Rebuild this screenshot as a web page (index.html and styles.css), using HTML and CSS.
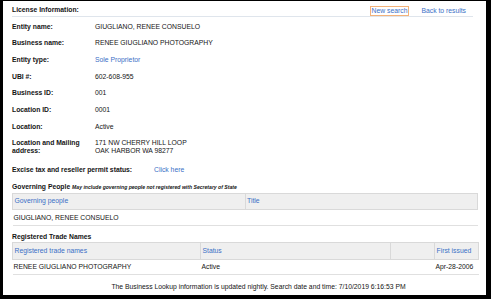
FILE: index.html
```html
<!DOCTYPE html>
<html lang="en">
<head>
  <meta charset="UTF-8" />
  <title>Business Lookup</title>
  <link rel="stylesheet" href="styles.css">
</head>
<body>
  <div class="page">
    <div class="page-header">
      <span class="page-title">License Information:</span>
      <div class="page-links">
        <a href="#" class="link focused">New search</a>
        <a href="#" class="link">Back to results</a>
      </div>
    </div>

    <div class="fields">
      <div class="label">Entity name:</div>
      <div class="value">GIUGLIANO, RENEE CONSUELO</div>
      <div class="label">Business name:</div>
      <div class="value">RENEE GIUGLIANO PHOTOGRAPHY</div>
      <div class="label">Entity type:</div>
      <div class="value"><a href="#" class="link">Sole Proprietor</a></div>
      <div class="label">UBI #:</div>
      <div class="value">602-608-955</div>
      <div class="label">Business ID:</div>
      <div class="value">001</div>
      <div class="label">Location ID:</div>
      <div class="value">0001</div>
      <div class="label">Location:</div>
      <div class="value">Active</div>
      <div class="label">Location and Mailing address:</div>
      <div class="value">171 NW CHERRY HILL LOOP<br>OAK HARBOR WA 98277</div>
    </div>

    <div class="excise">
      <div class="label excise-label">Excise tax and reseller permit status:</div>
      <a href="#" class="link">Click here</a>
    </div>

    <h3 class="section-title">Governing People <em class="note">May include governing people not registered with Secretary of State</em></h3>
    <table class="grid">
      <colgroup>
        <col class="half">
        <col class="half">
      </colgroup>
      <thead>
        <tr>
          <th><a href="#" class="link">Governing people</a></th>
          <th><a href="#" class="link">Title</a></th>
        </tr>
      </thead>
      <tbody>
        <tr>
          <td>GIUGLIANO, RENEE CONSUELO</td>
          <td></td>
        </tr>
      </tbody>
    </table>

    <h3 class="section-title trade-title">Registered Trade Names</h3>
    <table class="grid">
      <colgroup>
        <col class="col-name">
        <col class="col-status">
        <col class="col-blank">
        <col class="col-date">
      </colgroup>
      <thead>
        <tr>
          <th><a href="#" class="link">Registered trade names</a></th>
          <th><a href="#" class="link">Status</a></th>
          <th></th>
          <th><a href="#" class="link">First issued</a></th>
        </tr>
      </thead>
      <tbody>
        <tr>
          <td>RENEE GIUGLIANO PHOTOGRAPHY</td>
          <td>Active</td>
          <td></td>
          <td>Apr-28-2006</td>
        </tr>
      </tbody>
    </table>

    <p class="footer">The Business Lookup information is updated nightly. Search date and time: 7/10/2019 6:16:53 PM</p>
  </div>
</body>
</html>
```

FILE: styles.css
```css
body {
  margin: 0;
  background-color: #000000;
  font-family: 'Liberation Sans', Arial, sans-serif;
  font-size: 6.8px;
  line-height: 8px;
  color: #141414;
}
.page {
  margin: 1px 5px 0 3px;
  height: 294px;
  background-color: #FFFFFF;
  padding: 0 8px 0 9px;
  box-sizing: border-box;
  overflow: hidden;
}
.page-header {
  display: flex;
  justify-content: space-between;
  align-items: flex-end;
  height: 15px;
  border-bottom: 1px solid #dfe5ec;
  margin-right: 5px;
}
.page-title {
  font-weight: bold;
  margin-bottom: 2px;
}
.page-links {
  display: flex;
  gap: 10px;
  padding-right: 5px;
}
.link {
  color: #3b6fc6;
  text-decoration: none;
}
.page-links .link {
  border: 1px solid transparent;
  padding: 0 1px;
  line-height: 8px;
}
.page-links .focused {
  border-color: #f3b27a;
}
.fields {
  display: grid;
  grid-template-columns: 83px 1fr;
  row-gap: 8.67px;
  margin-top: 5.7px;
}
.label {
  font-weight: bold;
}
.excise {
  display: flex;
  margin-top: 11px;
}
.excise-label {
  width: 142px;
}
.section-title {
  font-size: 6.8px;
  line-height: 8px;
  margin: 9px 0 1.4px;
}
.trade-title {
  margin-top: 6.5px;
  margin-bottom: 1.4px;
}
.note {
  font-size: 5.1px;
}
.grid {
  width: 100%;
  border-collapse: collapse;
  table-layout: fixed;
}
.grid th,
.grid td {
  white-space: nowrap;
  overflow: hidden;
  text-align: left;
}
.grid th {
  background-color: #efefef;
  border: 1px solid #d9d9d9;
  font-weight: normal;
  padding: 3.8px 1.5px;
  height: 8px;
}
.grid td {
  border-bottom: 1px solid #e0e0e0;
  padding: 3.4px 1px;
  height: 8px;
}
.half {
  width: 50%;
}
.col-name {
  width: 188px;
}
.col-status {
  width: 190px;
}
.col-blank {
  width: 44px;
}
.col-date {
  width: 44px;
}
.footer {
  text-align: center;
  margin: 7.5px 0 0;
  padding-left: 27px;
}
```
